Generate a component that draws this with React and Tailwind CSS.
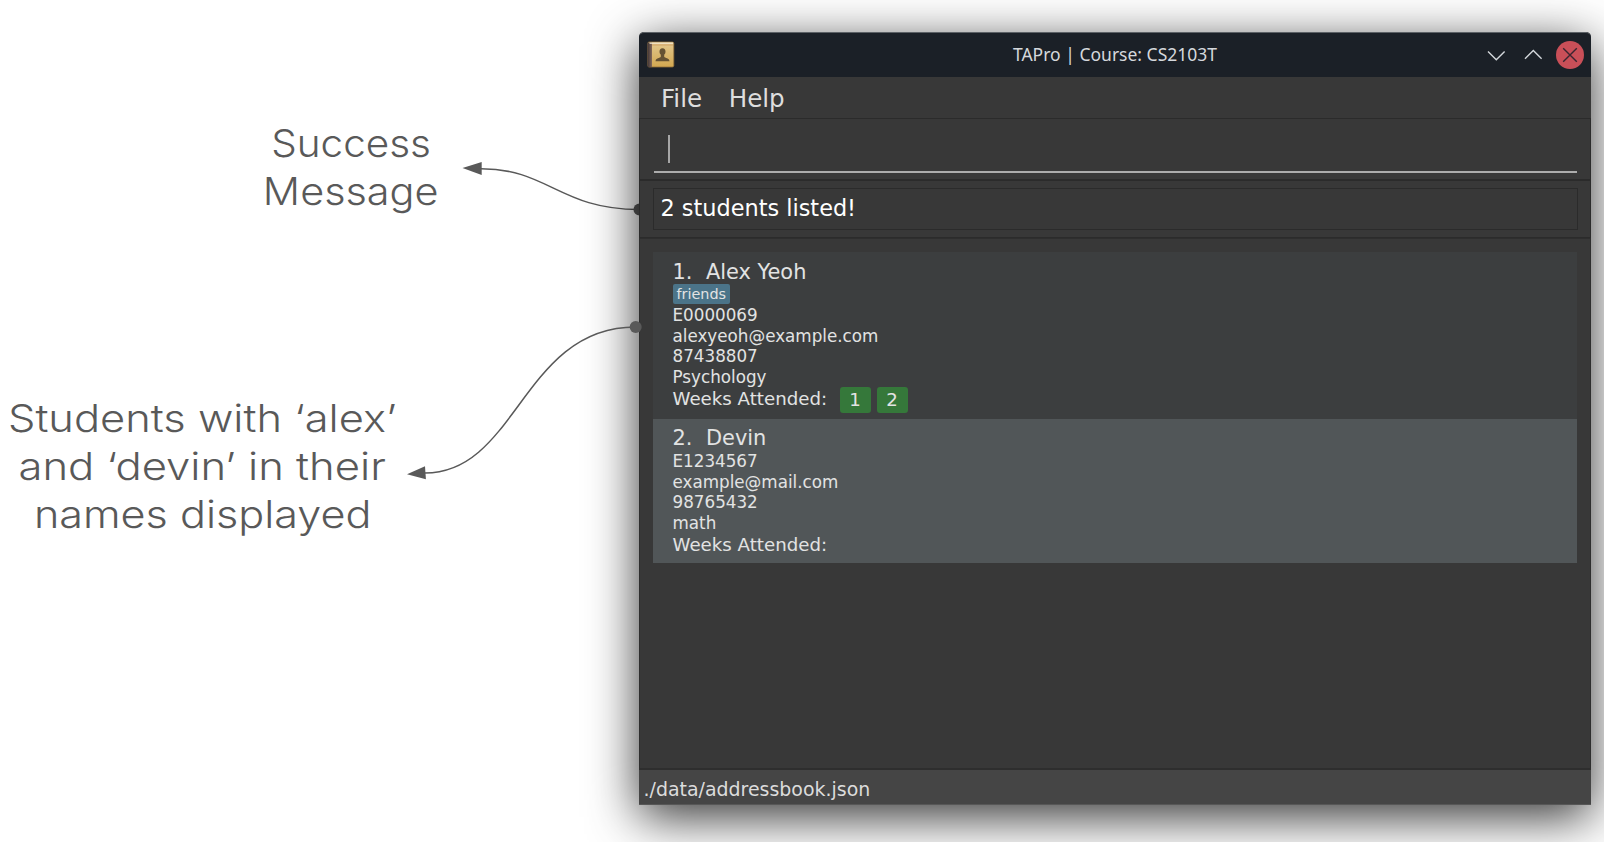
import React from "react";

const students = [
  {
    index: 1,
    name: "Alex Yeoh",
    tags: ["friends"],
    id: "E0000069",
    email: "alexyeoh@example.com",
    phone: "87438807",
    major: "Psychology",
    weeks: [1, 2],
    style: "h-[167px] bg-[#3c3e3f] pt-[7.7px]",
  },
  {
    index: 2,
    name: "Devin",
    tags: [],
    id: "E1234567",
    email: "example@mail.com",
    phone: "98765432",
    major: "math",
    weeks: [],
    style: "h-[144px] bg-[#515658] pt-[7.2px]",
  },
];

function NoteLine({ scale, children }) {
  return <div className={"whitespace-nowrap " + scale}>{children}</div>;
}

function BookIcon() {
  return (
    <svg className="h-[27px] w-[28px] shrink-0" viewBox="0 0 28 27">
      <defs>
        <linearGradient id="cover" x1="0" y1="0" x2="0" y2="1">
          <stop offset="0" stopColor="#e2c88f" />
          <stop offset="1" stopColor="#d3a850" />
        </linearGradient>
        <linearGradient id="spine" x1="0" y1="0" x2="1" y2="0">
          <stop offset="0" stopColor="#3d3335" />
          <stop offset="1" stopColor="#84695a" />
        </linearGradient>
      </defs>
      <rect x="0.8" y="1" width="26" height="25" rx="1.4" fill="url(#cover)" stroke="#93703a" strokeWidth="0.8" />
      <path d="M0.500 1.500h4.500v24.500H1.800Q0.500 26 0.500 24.500Z" fill="url(#spine)" />
      <path d="M2.500 2.200h23.500" stroke="#f3e8cf" strokeWidth="1.200" />
      <path d="M5 4h21" stroke="#c9925a" strokeWidth="0.7" />
      <path
        d="M15.500 7.300c-2 0-3 1.400-3 3.300 0 1.500.5 2.500 1.300 3.200v2c-.6 1.300-5.300 1.300-5.300 4.400h14c0-3.100-4.700-3.100-5.300-4.400v-2c.8-.7 1.300-1.700 1.300-3.200 0-1.900-1-3.300-3-3.300Z"
        fill="#655233"
      />
    </svg>
  );
}

function TitleBar() {
  return (
    <header className="grid h-[45px] shrink-0 grid-cols-[1fr_auto_1fr] items-center rounded-t-[5px] border-t border-[#5c6166] bg-[#1b2027]">
      <div className="pb-px pl-2">
        <BookIcon />
      </div>
      <h1 className="pb-px font-['Noto_Sans',sans-serif] text-[17.5px] text-[#d5d8dc]">
        TAPro | Course: CS2103T
      </h1>
      <div className="flex items-center justify-end pb-px pr-[7.5px]">
        <svg className="h-7 w-[103px]" viewBox="0 0 103 28" fill="none">
          <path d="M7 10.500l8.300 8.300 8.300-8.300M44 17.700l8.300-8.300 8.300 8.300" stroke="#d3d7db" strokeWidth="1.400" />
          <circle cx="89" cy="14" r="14" fill="#c94f58" />
          <path d="M82.200 7.200l13.600 13.600M95.800 7.200L82.200 20.800" stroke="#3a2530" strokeWidth="1.400" />
        </svg>
      </div>
    </header>
  );
}

function StudentCard({ s }) {
  return (
    <li className={"flex flex-col pl-[19.5px] text-[16.75px] leading-[20.5px] text-[#e2e3e3] " + s.style}>
      <div className="flex h-[25px] items-center gap-[13.5px] text-[20.9px] leading-[25px]">
        <span>{s.index}.</span>
        <span>{s.name}</span>
      </div>
      {s.tags.length > 0 && (
        <div className="flex h-[20.500px]">
          {s.tags.map((t) => (
            <span key={t} className="-mt-[0.5px] h-5 rounded-[2px] bg-[#4b7489] px-1 text-[14.4px] leading-5">
              {t}
            </span>
          ))}
        </div>
      )}
      <span>{s.id}</span>
      <span>{s.email}</span>
      <span>{s.phone}</span>
      <span>{s.major}</span>
      <div className="flex h-[25px] items-center text-[18.200px]">
        <span className="mr-[12.5px]">Weeks Attended:</span>
        <div className="flex gap-1.5">
          {s.weeks.map((w) => (
            <span key={w} className="h-[26px] w-[31px] rounded-[3px] bg-[#35783a] text-center leading-[26px]">
              {w}
            </span>
          ))}
        </div>
      </div>
    </li>
  );
}

function AppWindow() {
  return (
    <section className="mt-[32px] flex h-[772.5px] w-[952px] shrink-0 flex-col rounded-t-[5px] bg-[#383838] font-['DejaVu_Sans',sans-serif] shadow-[0_12px_50px_rgba(0,0,0,0.8)]">
      <TitleBar />
      <nav className="flex h-[41px] shrink-0 items-center gap-[26.5px] pl-[22px] pt-[3px] text-[24.600px] text-[#dedede]">
        <span>File</span>
        <span>Help</span>
      </nav>
      <div className="flex h-[62px] shrink-0 flex-col border border-[#2b2b2b] pl-[14px] pr-[13px] pt-4">
        <div className="flex h-[38px] border-b-2 border-[#acacac] pl-[14px]">
          <div className="h-7 w-[2px] bg-[#a6a6a6]" />
        </div>
      </div>
      <div className="h-[58px] shrink-0 border border-[#2b2b2b] pl-[13px] pr-3 pt-[7px]">
        <div className="flex h-[42px] items-center border border-[#2b2b2b] pl-[6.5px] text-[22.4px] text-white">
          <span>2 students listed!</span>
        </div>
      </div>
      <main className="flex-1 border border-b-2 border-[#2e2e2e] px-[13px] pt-[13px]">
        <ul className="w-[924px]">
          {students.map((s) => (
            <StudentCard key={s.index} s={s} />
          ))}
        </ul>
      </main>
      <footer className="flex h-[35px] shrink-0 items-center border-b border-[#575757] bg-[#454545] pl-[4.5px] pt-[5px] text-[18.950px] text-[#dcdcdc]">
        ./data/addressbook.json
      </footer>
    </section>
  );
}

export default function App() {
  return (
    <div className="relative flex h-[842px] w-[1604px] overflow-hidden bg-white">
      <aside className="flex w-[639px] shrink-0 flex-col font-['Inter',sans-serif] text-[38.5px] font-light leading-[48px] text-[#595959]">
        <div className="ml-[251px] mt-[119px] flex w-[200px] flex-col items-center">
          <NoteLine scale="scale-x-[1.05]">Success</NoteLine>
          <NoteLine scale="scale-x-[1.075]">Message</NoteLine>
        </div>
        <div className="mt-[179px] flex w-[405px] flex-col items-center">
          <NoteLine scale="scale-x-[1.128]">Students with ‘alex’</NoteLine>
          <NoteLine scale="scale-x-[1.133]">and ‘devin’ in their</NoteLine>
          <NoteLine scale="scale-x-[1.12]">names displayed</NoteLine>
        </div>
      </aside>
      <svg className="absolute left-0 top-0" width="660" height="842" fill="none">
        <path d="M639 209.500C560 209.500 548 168.700 481 168.700" stroke="#595959" strokeWidth="1.500" />
        <path d="M462.500 168L481.700 162V175Z" fill="#595959" />
        <circle cx="639.500" cy="209.500" r="6" fill="#595959" />
      </svg>
      <div className="relative">
        <AppWindow />
      </div>
      <svg className="absolute left-0 top-0" width="660" height="842" fill="none">
        <path d="M635.500 327C523 327 517 473 425 473" stroke="#595959" strokeWidth="1.500" />
        <path d="M407 474.200L425 466.200L425.900 479.300Z" fill="#595959" />
        <circle cx="635.700" cy="327" r="6" fill="#595959" />
      </svg>
    </div>
  );
}
